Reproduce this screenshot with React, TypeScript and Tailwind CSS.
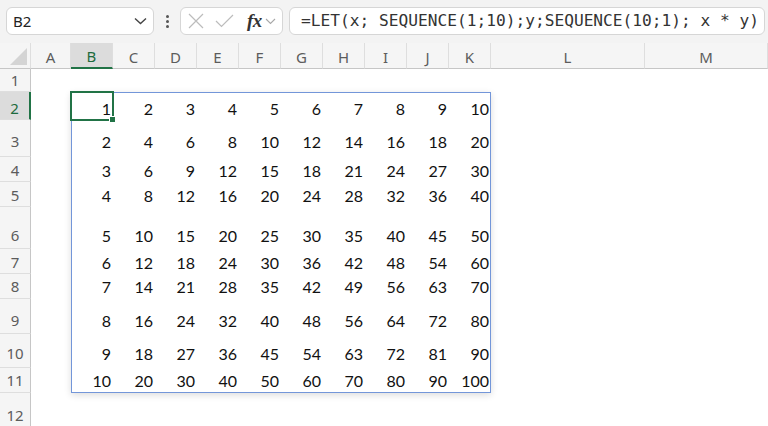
import React from 'react'

const rows = [
  { n: 1, h: 'h-[23px]', pb: 'pb-[1px]' },
  { n: 2, h: 'h-[28px]', pb: 'pb-[1px]' },
  { n: 3, h: 'h-[37px]', pb: 'pb-[5px]' },
  { n: 4, h: 'h-[25px]', pb: 'pb-[1px]' },
  { n: 5, h: 'h-[25px]', pb: 'pb-[1px]' },
  { n: 6, h: 'h-[42px]', pb: 'pb-[3px]' },
  { n: 7, h: 'h-[25px]', pb: 'pb-[1px]' },
  { n: 8, h: 'h-[25px]', pb: 'pb-[2px]' },
  { n: 9, h: 'h-[35px]', pb: 'pb-[3px]' },
  { n: 10, h: 'h-[34px]', pb: 'pb-[4px]' },
  { n: 11, h: 'h-[25px]', pb: 'pb-[2px]' },
  { n: 12, h: 'h-[34px]', pb: 'pb-[1px]' },
]

const cols = ['B', 'C', 'D', 'E', 'F', 'G', 'H', 'I', 'J', 'K']

const uiFont = "font-['Noto_Sans',sans-serif]"

function ColHeader({ label, w, active }: { label: string; w: string; active?: boolean }) {
  return (
    <div
      className={`${w} flex items-center justify-center pt-[2px] border-r border-[#dedede] text-[15px] leading-5 ${
        active
          ? 'bg-[#dcdcdc] text-[#1d6b3e] border-b-2 border-b-[#217346]'
          : 'text-[#5c5c5c] border-b border-b-[#c6c6c6]'
      }`}
    >
      {label}
    </div>
  )
}

export default function App() {
  const spill = rows.slice(1, 11)

  return (
    <div className={`w-[768px] h-[426px] overflow-hidden bg-white ${uiFont}`}>
      {/* formula bar */}
      <div className="h-[43px] bg-[#f3f3f3] flex items-start pt-[7px] pl-[6px] pr-[3px]">
        <div className="w-[148px] h-[28px] bg-white border border-[#d6d6d6] rounded-md flex items-center justify-between pl-[6px] pr-[6px]">
          <span className="text-[15px] text-[#222] leading-5">B2</span>
          <svg width="13" height="8" viewBox="0 0 13 8" fill="none">
            <path d="M1 1.5 L6.5 6.5 L12 1.5" stroke="#444" strokeWidth="1.4" />
          </svg>
        </div>
        <div className="w-[26px] h-[28px] flex flex-col items-center justify-center gap-[2px]">
          <span className="w-[3px] h-[3px] rounded-full bg-[#555]" />
          <span className="w-[3px] h-[3px] rounded-full bg-[#555]" />
          <span className="w-[3px] h-[3px] rounded-full bg-[#555]" />
        </div>
        <div className="w-[103px] h-[28px] bg-white border border-[#d6d6d6] rounded-md flex items-center pl-[7px] gap-[11px]">
          <svg width="16" height="16" viewBox="0 0 16 16" fill="none">
            <path d="M1 1 L15 15 M15 1 L1 15" stroke="#bcbcbc" strokeWidth="1.2" />
          </svg>
          <svg width="19" height="14" viewBox="0 0 19 14" fill="none">
            <path d="M1 7 L6.5 12.5 L18 1" stroke="#bcbcbc" strokeWidth="1.2" />
          </svg>
          <div className="flex items-center gap-[3px] ml-[2px]">
            <span className="font-['Liberation_Serif',serif] italic font-bold text-[19px] leading-5 text-[#333] tracking-[-0.5px]">
              fx
            </span>
            <svg width="11" height="7" viewBox="0 0 11 7" fill="none">
              <path d="M1 1 L5.5 5.5 L10 1" stroke="#a8a8a8" strokeWidth="1.1" />
            </svg>
          </div>
        </div>
        <div className="ml-[6px] flex-1 h-[28px] bg-white border border-[#d6d6d6] rounded-md flex items-center pl-[11px]">
          <span className="font-['DejaVu_Sans_Mono',monospace] text-[16.2px] leading-5 text-[#333] whitespace-nowrap">
            =LET(x; SEQUENCE(1;10);y;SEQUENCE(10;1); x * y)
          </span>
        </div>
      </div>

      {/* column headers */}
      <div className="h-[26px] flex bg-[#f5f5f5]">
        <div className="w-[31px] border-r border-[#dedede] border-b border-b-[#c6c6c6] flex items-end justify-end pr-[3px] pb-[3px]">
          <svg width="17" height="17" viewBox="0 0 17 17">
            <path d="M17 0 L17 17 L0 17 Z" fill="#d4d4d4" />
          </svg>
        </div>
        <ColHeader label="A" w="w-[40px]" />
        {cols.map((c) => (
          <ColHeader key={c} label={c} w="w-[42px]" active={c === 'B'} />
        ))}
        <ColHeader label="L" w="w-[154px]" />
        <ColHeader label="M" w="flex-1" />
      </div>

      {/* sheet body */}
      <div className="flex">
        <div className="w-[31px] flex flex-col bg-[#f5f5f5]">
          {rows.map((r) => (
            <div
              key={r.n}
              className={`${r.h} ${r.pb} flex items-end justify-center border-b border-[#dedede] text-[15px] leading-5 ${
                r.n === 2
                  ? 'bg-[#dcdcdc] text-[#1d6b3e] border-r-2 border-r-[#217346]'
                  : 'text-[#5c5c5c] border-r border-r-[#c6c6c6]'
              }`}
            >
              {r.n}
            </div>
          ))}
        </div>

        <div className="flex-1 flex flex-col">
          <div className={rows[0].h} />
          <div className="flex">
            <div className="w-[40px]" />
            <div className="relative flex flex-col font-['Lato',sans-serif] text-[16px] leading-5 text-[#111]">
              {spill.map((r, i) => (
                <div key={r.n} className={`${r.h} flex`}>
                  {cols.map((c, j) => (
                    <div key={c} className={`relative w-[42px] ${r.pb} pr-[2px] flex items-end justify-end`}>
                      {(i + 1) * (j + 1)}
                      {i === 0 && j === 0 && (
                        <div className="absolute -inset-[1px] border-2 border-[#217346] z-10">
                          <div className="absolute -right-[4px] -bottom-[4px] w-[7px] h-[7px] bg-[#217346] border border-white" />
                        </div>
                      )}
                    </div>
                  ))}
                </div>
              ))}
              <div className="absolute inset-0 border border-[#7396d9] shadow-[0_2px_7px_rgba(0,0,0,0.14)] pointer-events-none" />
            </div>
          </div>
        </div>
      </div>
    </div>
  )
}
